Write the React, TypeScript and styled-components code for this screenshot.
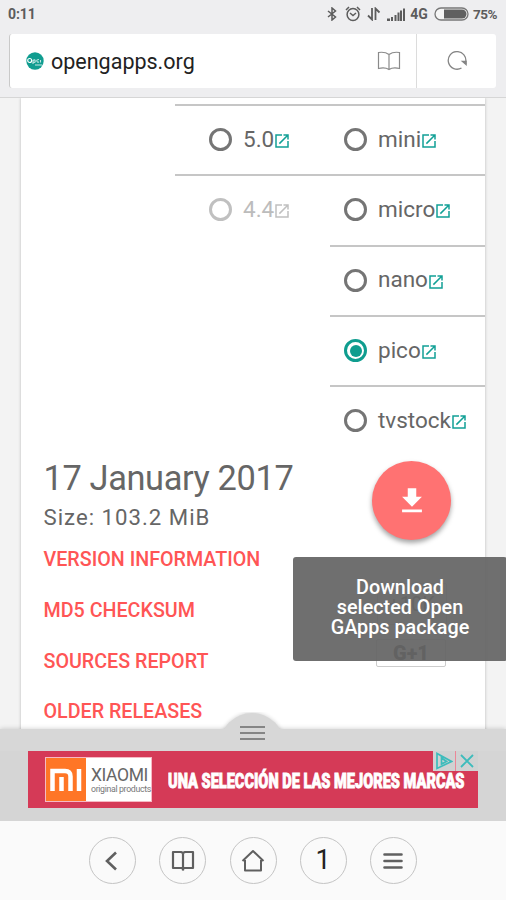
import React from "react";
import styled, { createGlobalStyle, css } from "styled-components";

const Global = createGlobalStyle`
  * { box-sizing: border-box; }
  body { margin: 0; background: #f3f3f3; font-family: Roboto, "Liberation Sans", sans-serif; }
`;

const Screen = styled.div`
  width: 506px;
  height: 900px;
  display: flex;
  flex-direction: column;
  overflow: hidden;
  background: #f3f3f3;
`;

const Header = styled.header`
  height: 98px;
  flex: none;
  background: #eeeef0;
  border-bottom: 1px solid #d6d6d6;
`;

const StatusBar = styled.div`
  height: 34px;
  padding: 0 9px 6px 8px;
  display: flex;
  align-items: center;
  justify-content: space-between;
  color: #5c5c5c;
  font-size: 14px;
  font-weight: 700;
`;

const Clock = styled.span`
  letter-spacing: -0.1px;
`;

const StatusIcons = styled.div`
  display: flex;
  align-items: center;
  color: #5c5c5c;
  svg { display: block; }
`;

const AlarmIcon = styled.svg`
  margin: 0 0 0 8px;
`;

const Network = styled.span`
  margin: 0 6px 0 5px;
  font-size: 14px;
`;

const Percent = styled.span`
  margin-left: 4px;
  font-size: 13.5px;
  letter-spacing: -0.45px;
`;

const AddressBar = styled.div`
  height: 54px;
  margin: 0 10px 0 9px;
  display: flex;
  align-items: center;
  background: #fff;
  border-left: 1px solid #c9c9c9;
  border-radius: 3px;
`;

const SiteIcon = styled.svg`
  margin-left: 16px;
  flex: none;
`;

const Url = styled.span`
  flex: 1;
  margin-left: 7px;
  padding-top: 2px;
  font-size: 21.5px;
  line-height: 54px;
  color: #222;
`;

const ReaderButton = styled.div`
  width: 54px;
  height: 54px;
  display: flex;
  align-items: center;
  justify-content: center;
`;

const ReloadButton = styled(ReaderButton)`
  width: 80px;
  border-left: 1px solid #dcdcdc;
`;

const Page = styled.main`
  height: 631px;
  flex: none;
  padding: 0 21px;
  overflow: hidden;
`;

const Card = styled.section`
  width: 463.5px;
  height: 640px;
  background: #fff;
  box-shadow: 0 0 3px rgba(0, 0, 0, 0.24);
`;

const Options = styled.div`
  display: grid;
  grid-template-columns: 155px 154.5px;
  align-items: start;
  padding: 6px 0 0 154px;
`;

const Option = styled.div<{ $disabled?: boolean }>`
  height: 70.3px;
  padding: 0 0 1px 14px;
  display: flex;
  align-items: center;
  border-top: 2px solid #c6c6c6;
  color: ${(p) => (p.$disabled ? "#bcbcbc" : "#666")};
`;

const VersionColumn = styled.div`
  ${Option} { padding-left: 34px; }
`;

const Radio = styled.span<{ $checked?: boolean; $disabled?: boolean }>`
  width: 23px;
  height: 23px;
  flex: none;
  display: grid;
  place-items: center;
  border: 3px solid ${(p) => (p.$checked ? "#0f9d8f" : p.$disabled ? "#c0c0c0" : "#757575")};
  border-radius: 50%;
  ${(p) =>
    p.$checked &&
    css`
      &::after {
        content: "";
        width: 12px;
        height: 12px;
        border-radius: 50%;
        background: #0f9d8f;
      }
    `}
`;

const OptionLabel = styled.span`
  margin-left: 11px;
  padding-bottom: 2px;
  font-size: 22.5px;
  line-height: 30px;
`;

const LinkIcon = styled.svg<{ $disabled?: boolean }>`
  width: 18px;
  height: 18px;
  margin: 3px 0 0 -1px;
  flex: none;
  fill: ${(p) => (p.$disabled ? "#c0c0c0" : "#12a096")};
`;

const Release = styled.div`
  display: flex;
  justify-content: space-between;
  padding: 2px 33.5px 0 22.5px;
`;

const Info = styled.div`
  display: flex;
  flex-direction: column;
  align-items: flex-start;
  white-space: nowrap;
`;

const ReleaseDate = styled.div`
  height: 42px;
  font-size: 34.4px;
  line-height: 42px;
  letter-spacing: -0.38px;
  color: #666;
`;

const Size = styled.div`
  height: 38px;
  font-size: 22.2px;
  line-height: 37px;
  letter-spacing: 1px;
  color: #666;
`;

const InfoLink = styled.a`
  height: 50.6px;
  font-size: 19.7px;
  font-weight: 500;
  line-height: 46px;
  color: #ff5555;
`;

const Actions = styled.div`
  width: 79px;
  display: flex;
  flex-direction: column;
  align-items: center;
  position: relative;
`;

const DownloadButton = styled.div`
  width: 79px;
  height: 79px;
  margin-top: 4px;
  display: flex;
  align-items: center;
  justify-content: center;
  border-radius: 50%;
  background: #ff7272;
  box-shadow: 0 3px 5px rgba(0, 0, 0, 0.36);
`;

const ShareCount = styled.div`
  width: 70px;
  height: 42px;
  margin-top: 43px;
  border: 1px solid #ccc;
  border-radius: 2px;
  text-align: center;
  font-size: 20px;
  line-height: 40px;
  color: #777;
`;

const ShareButton = styled.div`
  width: 70px;
  height: 28px;
  margin: 14px 1px 0 0;
  border: 1px solid #ccc;
  border-radius: 2px;
  text-align: center;
  font-size: 20px;
  font-weight: 900;
  line-height: 26px;
  color: #444;
`;

const Tooltip = styled.div`
  position: absolute;
  top: 100px;
  left: -79px;
  width: 214px;
  height: 104px;
  padding: 21px 0 0;
  border-radius: 3px;
  background: rgba(100, 100, 100, 0.93);
  color: #fff;
  font-size: 19.8px;
  font-weight: 500;
  line-height: 20px;
  text-align: center;
`;

const Drawer = styled.section`
  height: 92px;
  flex: none;
  display: flex;
  flex-direction: column;
  align-items: center;
  position: relative;
  background: #d7d7d7;
  box-shadow: 0 0 5px rgba(0, 0, 0, 0.2);
`;

const HandleBump = styled.div`
  position: absolute;
  top: -17px;
  left: 212px;
  width: 80px;
  height: 17px;
  overflow: hidden;
  &::before {
    content: "";
    display: block;
    width: 64px;
    height: 64px;
    margin: 1px auto 0;
    border-radius: 50%;
    background: #d7d7d7;
    box-shadow: 0 0 4px rgba(0, 0, 0, 0.2);
  }
`;

const Grip = styled.svg`
  position: absolute;
  top: -4px;
  left: 240px;
`;

const AdSlot = styled.div`
  width: 506px;
  height: 70px;
  margin-top: 22px;
  padding: 0 28px;
  background: #d5d5d5;
`;

const Ad = styled.div`
  width: 450px;
  height: 57px;
  display: flex;
  align-items: center;
  position: relative;
  padding-left: 17px;
  background: #d53a57;
`;

const Brand = styled.div`
  width: 107px;
  height: 45px;
  flex: none;
  display: flex;
  background: #fff;
  border: 1px solid #f6b9c4;
`;

const BrandMark = styled.div`
  width: 40px;
  height: 43px;
  flex: none;
  display: grid;
  place-items: center;
  background: #ff7626;
`;

const BrandText = styled.div`
  padding: 7px 0 0 5px;
  white-space: nowrap;
  color: #666;
`;

const BrandName = styled.div`
  font-size: 17.5px;
  line-height: 20px;
  letter-spacing: -0.4px;
`;

const BrandSub = styled.div`
  font-size: 8.8px;
  line-height: 8px;
  letter-spacing: -0.35px;
  color: #777;
`;

const Slogan = styled.div`
  width: 300px;
  margin-left: 16px;
  padding-top: 2px;
  white-space: nowrap;
  color: #fff;
  font-size: 20.5px;
  font-weight: 900;
  line-height: 24px;
  -webkit-text-stroke: 0.9px #fff;
  transform: scaleX(0.71);
  transform-origin: left center;
`;

const AdControls = styled.div`
  position: absolute;
  top: 0;
  right: 0;
  display: flex;
`;

const AdControl = styled.div`
  width: 22px;
  height: 20px;
  display: grid;
  place-items: center;
  background: #d0d2d2;
  & + & {
    width: 23px;
    border-left: 1px solid #ec8797;
  }
`;

const NavBar = styled.nav`
  flex: 1;
  display: flex;
  justify-content: center;
  gap: 23.2px;
  padding: 16px 0 0 0;
  position: relative;
  background: #fafafa;
`;

const NavButton = styled.div`
  width: 47px;
  height: 47px;
  display: grid;
  place-items: center;
  border: 1px solid #c4c4c4;
  border-radius: 50%;
  font-size: 27px;
  line-height: 45px;
  color: #222;
`;

const OpenIcon = ({ disabled }: { disabled?: boolean }) => (
  <LinkIcon viewBox="0 0 24 24" $disabled={disabled}>
    <path d="M19 19H5V5h7V3H3v18h18v-9h-2v7zM14 3v2h3.600l-9.800 9.800 1.400 1.400L19 6.400V10h2V3h-7z" />
  </LinkIcon>
);

type Choice = { label: string; disabled?: boolean; checked?: boolean };

const versions: Choice[] = [{ label: "5.0" }, { label: "4.4", disabled: true }];
const variants: Choice[] = [
  { label: "mini" },
  { label: "micro" },
  { label: "nano" },
  { label: "pico", checked: true },
  { label: "tvstock" },
];
const links = ["VERSION INFORMATION", "MD5 CHECKSUM", "SOURCES REPORT", "OLDER RELEASES"];

const OptionRow = ({ label, disabled, checked }: Choice) => (
  <Option $disabled={disabled}>
    <Radio $disabled={disabled} $checked={checked} />
    <OptionLabel>{label}</OptionLabel>
    <OpenIcon disabled={disabled} />
  </Option>
);

export default function App() {
  return (
    <Screen>
      <Global />
      <Header>
        <StatusBar>
          <Clock>0:11</Clock>
          <StatusIcons>
            <svg width="10" height="14" viewBox="0 0 10 14" fill="none" stroke="currentColor" strokeWidth="1.5">
              <path d="M1 4l7.500 6L5 13V1l3.500 3L1 10" />
            </svg>
            <AlarmIcon width="16" height="16" viewBox="0 0 16 16" fill="none" stroke="currentColor" strokeWidth="1.5">
              <circle cx="8" cy="8.500" r="5.900" />
              <path d="M5 7l3 2.500L11 7M1 4l3-3M15 4l-3-3" />
            </AlarmIcon>
            <svg width="26" height="14" viewBox="0 0 26 14" fill="none" stroke="currentColor" strokeWidth="1.8">
              <path d="M11 1v11.500L7 8.500M14.500 13V1.500l4 4" />
            </svg>
            <svg width="18" height="13" viewBox="0 0 18 13" fill="currentColor">
              <path d="M0 10.500h3V13H0zM4 9h2v4H4zM7.500 7h2v6h-2zM10.500 4.500h2V13h-2zM13 2.500h2V13h-2zM16 .5h2V13h-2z" />
            </svg>
            <Network>4G</Network>
            <svg width="35" height="14" viewBox="0 0 35 14">
              <rect x="1" y="1" width="33" height="12" rx="6" fill="#f5f5f5" stroke="#777" strokeWidth="1.300" />
              <path d="M10 2.500h18a4.500 4.500 0 0 1 0 9H10z" fill="#606060" />
            </svg>
            <Percent>75%</Percent>
          </StatusIcons>
        </StatusBar>
        <AddressBar>
          <SiteIcon width="18" height="18" viewBox="0 0 18 18">
            <circle cx="9" cy="9" r="8.700" fill="#109d90" />
            <g fill="none" stroke="#fff" strokeWidth="1.100">
              <circle cx="3.700" cy="8.500" r="2" />
              <path d="M7 12V8.500q2-1.500 2.200.5T7 10M13 7.500q-2.500 0-2.200 1.500t2.200 1M14.500 8v2.500M9 13h7" opacity=".75" />
            </g>
          </SiteIcon>
          <Url>opengapps.org</Url>
          <ReaderButton>
            <svg width="24" height="20" viewBox="0 0 24 20" fill="none" stroke="#8a8a8a" strokeWidth="1.200">
              <path d="M12 3.500Q8 .5 1.500 1.500v16Q8 16 12 18.500 16 16 22.500 17.500v-16Q16 .5 12 3.500zM12 3.500v15" />
            </svg>
          </ReaderButton>
          <ReloadButton>
            <svg width="20" height="20" viewBox="0 0 20 20" fill="none" stroke="#858585" strokeWidth="1.300">
              <path d="M14.500 17A8.800 8.800 0 1 1 18.600 11.500" />
              <path d="M15.500 10.500h3.600v3z" fill="#858585" />
            </svg>
          </ReloadButton>
        </AddressBar>
      </Header>
      <Page>
        <Card>
          <Options>
            <VersionColumn>{versions.map((v) => <OptionRow key={v.label} {...v} />)}</VersionColumn>
            <div>{variants.map((v) => <OptionRow key={v.label} {...v} />)}</div>
          </Options>
          <Release>
            <Info>
              <ReleaseDate>17 January 2017</ReleaseDate>
              <Size>Size: 103.2 MiB</Size>
              {links.map((l) => <InfoLink key={l}>{l}</InfoLink>)}
            </Info>
            <Actions>
              <DownloadButton>
                <svg width="34" height="34" viewBox="0 0 24 24" fill="#fff">
                  <path d="M19 9h-4V3H9v6H5l7 7 7-7zM5 18v2h14v-2H5z" />
                </svg>
              </DownloadButton>
              <ShareCount>+10K</ShareCount>
              <ShareButton>G+1</ShareButton>
              <Tooltip>Download<br />selected Open<br />GApps package</Tooltip>
            </Actions>
          </Release>
        </Card>
      </Page>
      <Drawer>
        <HandleBump />
        <AdSlot>
          <Ad>
            <Brand>
              <BrandMark>
                <svg width="32" height="24" viewBox="0 0 32 24" fill="none" stroke="#fff" strokeWidth="4.500">
                  <path d="M2.500 23V3H15q5.500 0 5.500 5.500V23M11.500 9v14M29 1v22" />
                </svg>
              </BrandMark>
              <BrandText>
                <BrandName>XIAOMI</BrandName>
                <BrandSub>original products</BrandSub>
              </BrandText>
            </Brand>
            <Slogan>UNA SELECCIÓN DE LAS MEJORES MARCAS</Slogan>
            <AdControls>
              <AdControl>
                <svg width="18" height="18" viewBox="0 0 18 18" fill="none" stroke="#3dbcbc" strokeWidth="1.700">
                  <path d="M2 1.500v15l14.500-7zM6.500 6v6l5-2.500z" />
                </svg>
              </AdControl>
              <AdControl>
                <svg width="14" height="14" viewBox="0 0 14 14" stroke="#3dbcbc" strokeWidth="1.800">
                  <path d="M1 1l12 12M13 1L1 13" />
                </svg>
              </AdControl>
            </AdControls>
          </Ad>
        </AdSlot>
        <Grip width="25" height="16" viewBox="0 0 25 16" stroke="#858585" strokeWidth="2.200">
          <path d="M0 2h25M0 8h25M0 14h25" />
        </Grip>
      </Drawer>
      <NavBar>
        <NavButton>
          <svg width="24" height="24" viewBox="0 0 24 24" fill="none" stroke="#606060" strokeWidth="2.600">
            <path d="M15 3.500L6 12l9 8.500" />
          </svg>
        </NavButton>
        <NavButton>
          <svg width="24" height="22" viewBox="0 0 24 22" fill="none" stroke="#606060" strokeWidth="2.200" strokeLinejoin="round">
            <path d="M12 3L10 2H2v16h9l1 1.500 1-1.500h9V2h-8zM12 3v17.500" />
          </svg>
        </NavButton>
        <NavButton>
          <svg width="24" height="24" viewBox="0 0 24 24" fill="none" stroke="#606060" strokeWidth="2" strokeLinejoin="round">
            <path d="M4 11v10.500h16V11M1.500 12L12 2l10.500 10" />
          </svg>
        </NavButton>
        <NavButton>1</NavButton>
        <NavButton>
          <svg width="20" height="18" viewBox="0 0 20 18" stroke="#606060" strokeWidth="2.600" strokeLinecap="round">
            <path d="M1.500 2.500h17M1.500 9h17M1.500 15.500h17" />
          </svg>
        </NavButton>
      </NavBar>
    </Screen>
  );
}
